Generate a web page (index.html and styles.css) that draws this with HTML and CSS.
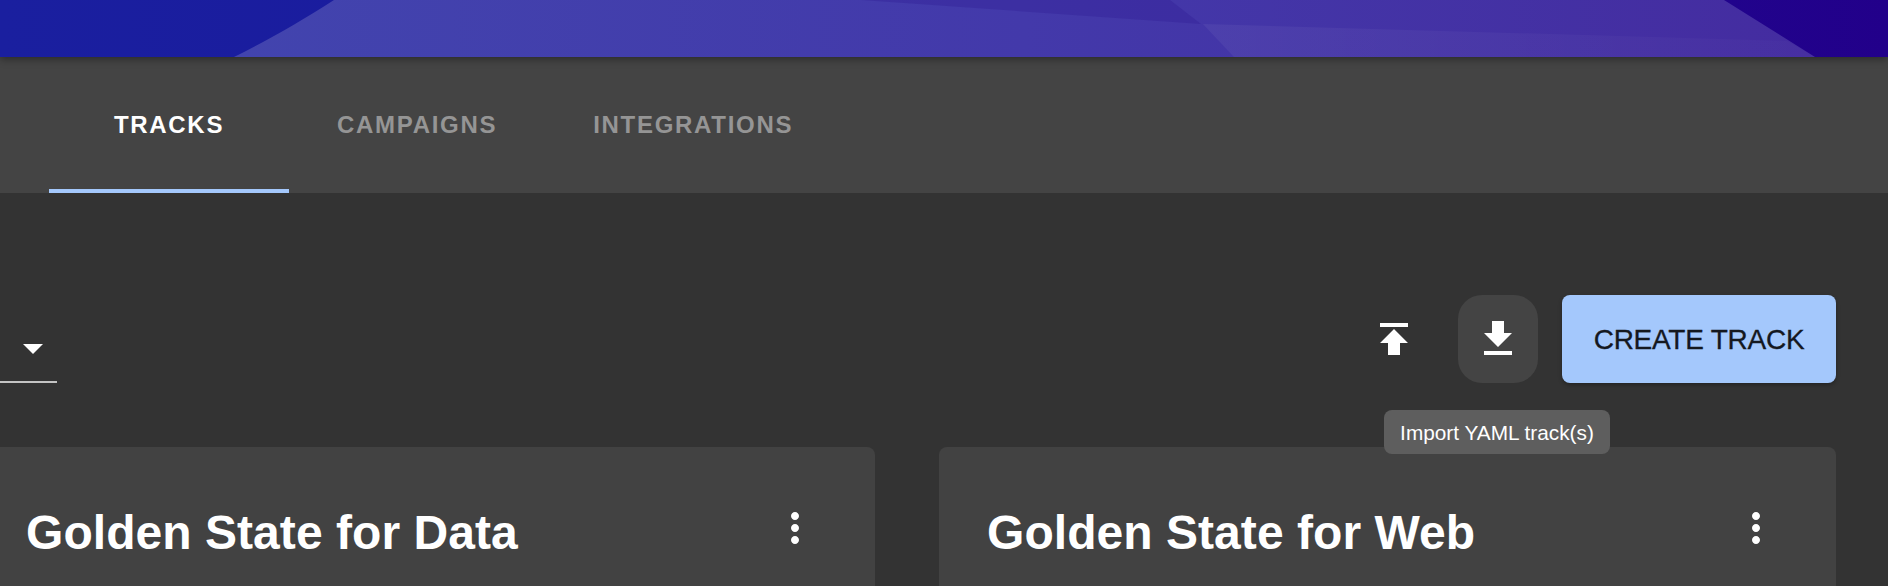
FILE: index.html
```html
<!DOCTYPE html>
<html lang="en">
<head>
	<meta charset="UTF-8">
	<meta name="viewport" content="width=device-width, initial-scale=1.0">
	<title>Tracks</title>
	<link rel="stylesheet" href="styles.css">
</head>
<body>

	<header class="banner">
		<svg class="banner-art" viewBox="0 0 1888 57" preserveAspectRatio="none">
			<defs>
				<linearGradient id="bannerBase" x1="0" x2="1" y1="0" y2="0">
					<stop offset="0" stop-color="#1a1f9f"/>
					<stop offset="0.2" stop-color="#1a1c9e"/>
					<stop offset="1" stop-color="#22008a"/>
				</linearGradient>
				<linearGradient id="bannerWave" gradientUnits="userSpaceOnUse" x1="234" x2="1815" y1="0" y2="0">
					<stop offset="0" stop-color="#4244ae"/>
					<stop offset="0.5" stop-color="#4339aa"/>
					<stop offset="1" stop-color="#442ca0"/>
				</linearGradient>
				<linearGradient id="bannerLight" gradientUnits="userSpaceOnUse" x1="1203" x2="1815" y1="0" y2="0">
					<stop offset="0" stop-color="#ffffff" stop-opacity="0.05"/>
					<stop offset="1" stop-color="#ffffff" stop-opacity="0.015"/>
				</linearGradient>
			</defs>
			<rect width="1888" height="57" fill="url(#bannerBase)"/>
			<path d="M334 0C300 22 268 40 234 57H1815L1724 0Z" fill="url(#bannerWave)"/>
			<path d="M861 0L1201 24 1170 0Z" fill="#2a1590" fill-opacity="0.28"/>
			<path d="M1203 24L1234 57H1815L1787 41Z" fill="url(#bannerLight)"/>
		</svg>
	</header>

	<nav class="tabs">
		<a class="tab tab-active">TRACKS</a>
		<a class="tab">CAMPAIGNS</a>
		<a class="tab">INTEGRATIONS</a>
	</nav>

	<main class="content">
		<div class="toolbar">
			<div class="select">
				<svg class="select-arrow" viewBox="0 0 24 24"><path d="M7 10l5 5 5-5z"/></svg>
			</div>
			<div class="actions">
				<button class="icon-btn">
					<svg viewBox="0 0 24 24"><path d="M5 4v2h14V4H5zm0 10h4v6h6v-6h4l-7-7-7 7z"/></svg>
				</button>
				<button class="icon-btn icon-btn-hover">
					<svg viewBox="0 0 24 24"><path d="M19 9h-4V3H9v6H5l7 7 7-7zM5 18v2h14v-2H5z"/></svg>
					<span class="tooltip">Import YAML track(s)</span>
				</button>
				<button class="create-btn">CREATE TRACK</button>
			</div>
		</div>

		<div class="cards">
			<section class="card">
				<h2 class="card-title">Golden State for Data</h2>
				<svg class="kebab" viewBox="0 0 24 24"><path d="M12 8c1.100 0 2-.9 2-2s-.9-2-2-2-2 .9-2 2 .9 2 2 2zm0 2c-1.100 0-2 .9-2 2s.9 2 2 2 2-.9 2-2-.9-2-2-2zm0 6c-1.100 0-2 .9-2 2s.9 2 2 2 2-.9 2-2-.9-2-2-2z"/></svg>
			</section>
			<section class="card">
				<h2 class="card-title">Golden State for Web</h2>
				<svg class="kebab" viewBox="0 0 24 24"><path d="M12 8c1.100 0 2-.9 2-2s-.9-2-2-2-2 .9-2 2 .9 2 2 2zm0 2c-1.100 0-2 .9-2 2s.9 2 2 2 2-.9 2-2-.9-2-2-2zm0 6c-1.100 0-2 .9-2 2s.9 2 2 2 2-.9 2-2-.9-2-2-2z"/></svg>
			</section>
		</div>
	</main>

</body>
</html>
```

FILE: styles.css
```css
html, body {
	margin: 0;
	height: 586px;
	overflow: hidden;
	background-color: #333333;
	font-family: 'Liberation Sans', Arial, sans-serif;
	color: white;
}
svg {
	display: block;
	fill: white;
}
.banner {
	position: relative;
	z-index: 1;
	height: 57px;
	box-shadow: 0 2px 8px rgba(0, 0, 0, 0.4);
}
.banner-art {
	width: 100%;
	height: 57px;
}
.tabs {
	display: flex;
	height: 136px;
	padding-left: 49px;
	background-color: #444444;
}
.tab {
	display: flex;
	align-items: center;
	justify-content: center;
	box-sizing: border-box;
	padding: 0 48px;
	min-width: 240px;
	font-size: 24px;
	font-weight: bold;
	letter-spacing: 1.700px;
	color: #959595;
}
.tab-active {
	color: white;
	box-shadow: inset 0 -4px 0 #a4c8fc;
}
.content {
	padding: 102px 52px 0 0;
}
.toolbar {
	display: flex;
	justify-content: space-between;
	height: 88px;
}
.select {
	box-sizing: border-box;
	width: 57px;
	height: 88px;
	padding: 29px 0 0 9px;
	border-bottom: 2px solid #c4c4c4;
}
.select-arrow {
	width: 48px;
	height: 48px;
}
.actions {
	display: flex;
	gap: 24px;
}
.icon-btn {
	position: relative;
	display: flex;
	align-items: center;
	justify-content: center;
	width: 80px;
	height: 88px;
	padding: 0;
	border: none;
	border-radius: 24px;
	background-color: transparent;
}
.icon-btn svg {
	width: 48px;
	height: 48px;
}
.icon-btn-hover {
	background-color: #444444;
}
.create-btn {
	width: 274px;
	height: 88px;
	padding: 2px 0 0;
	border: none;
	border-radius: 8px;
	background-color: #a4c8fc;
	color: #14181f;
	font-family: inherit;
	font-size: 28px;
	letter-spacing: -0.250px;
	-webkit-text-stroke: 0.300px #14181f;
	box-shadow: 0 2px 4px rgba(0, 0, 0, 0.3);
}
.tooltip {
	position: absolute;
	z-index: 2;
	top: 115px;
	left: -74px;
	width: 226px;
	height: 44px;
	line-height: 45px;
	border-radius: 8px;
	background-color: #5e5e5e;
	color: white;
	font-size: 20.800px;
	text-align: center;
	white-space: nowrap;
}
.cards {
	display: grid;
	grid-template-columns: 897px 897px;
	gap: 64px;
	margin: 64px 0 0 -22px;
}
.card {
	display: flex;
	justify-content: space-between;
	height: 139px;
	padding: 57px 56px 0 48px;
	border-radius: 8px 8px 0 0;
	background-color: #424242;
	box-sizing: border-box;
}
.card-title {
	margin: 1px 0 0;
	font-size: 48px;
	line-height: 55px;
	font-weight: bold;
	letter-spacing: 0.050px;
}
.kebab {
	width: 48px;
	height: 48px;
}
```
